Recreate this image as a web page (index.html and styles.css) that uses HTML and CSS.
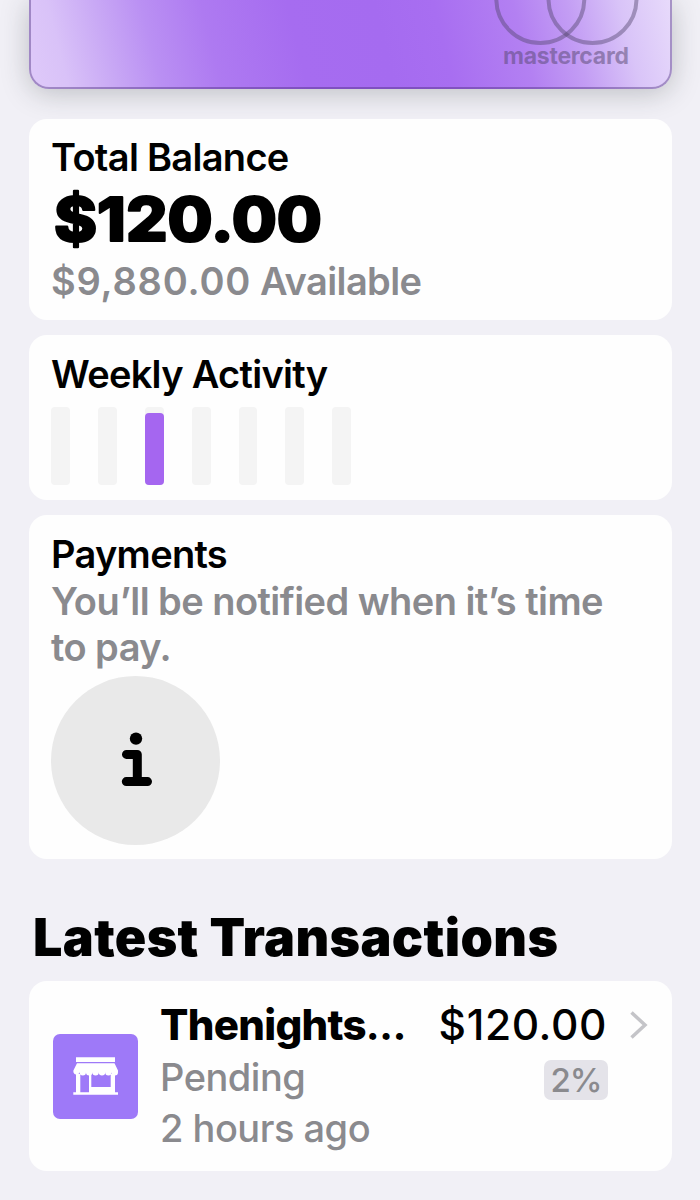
FILE: index.html
```
<!DOCTYPE html>
<html lang="en">
<head>
    <meta charset="UTF-8">
    <meta name="viewport" content="width=device-width, initial-scale=1.0">
    <title>Card</title>
    <link rel="stylesheet" href="styles.css">
</head>
<body>
    <div class="wallet">
        <div class="credit-card">
            <svg class="brand" width="150" height="88" viewBox="0 0 150 88">
                <g class="brand-rings">
                    <circle cx="50.3" cy="-1" r="44"/>
                    <circle cx="102.5" cy="-1" r="44"/>
                </g>
                <text class="brand-name" x="13" y="63.5" textLength="126">mastercard</text>
            </svg>
        </div>

        <div class="panel balance">
            <h2>Total Balance</h2>
            <svg class="amount" width="290" height="76" viewBox="0 0 290 76">
                <text x="3" y="61" textLength="268" lengthAdjust="spacingAndGlyphs">$120.00</text>
            </svg>
            <p class="available"><span class="digits">$9,880.00</span> Available</p>
        </div>

        <div class="panel activity">
            <h2>Weekly Activity</h2>
            <div class="bars">
                <div class="bar"></div>
                <div class="bar"></div>
                <div class="bar"><span style="height: 92%"></span></div>
                <div class="bar"></div>
                <div class="bar"></div>
                <div class="bar"></div>
                <div class="bar"></div>
            </div>
        </div>

        <div class="panel payments">
            <h2>Payments</h2>
            <p class="notice">You’ll be notified when it’s time<br>to pay.</p>
            <div class="info">
                <svg width="32" height="56" viewBox="0 0 32 56">
                    <circle cx="16" cy="6.6" r="6.2"/>
                    <path d="M6.5 22.4H17.3V49.6H6.3H27.5"/>
                </svg>
            </div>
        </div>

        <h1>Latest Transactions</h1>

        <div class="panel transaction">
            <div class="shop-icon">
                <svg width="85" height="85" viewBox="0 0 85 85">
                    <path d="M23 23.3H62V28H23Z"/>
                    <path d="M24 29.3H61.5L65 36.5V38.3a3.2 3.2 0 0 1-6.4 0a3.2 3.2 0 0 1-6.4 0a3.2 3.2 0 0 1-6.4 0a3.2 3.2 0 0 1-6.4 0a3.2 3.2 0 0 1-6.4 0a3.2 3.2 0 0 1-6.4 0a3.2 3.2 0 0 1-6.2 0V36.5Z"/>
                    <path d="M23 40H27.3V58.3H36V40H38.3V53H57.7V40H62V58.3H65V60.7H20.3V58.3H23Z"/>
                </svg>
            </div>
            <div class="details">
                <div class="merchant">Thenights<span class="dots">…</span></div>
                <div class="status">Pending</div>
                <div class="time">2 hours ago</div>
            </div>
            <div class="price">
                <div class="total">$120.00</div>
                <div class="cashback">2%</div>
            </div>
            <svg class="chevron" width="18" height="28" viewBox="0 0 18 28">
                <path d="M1.5 1.5L15 14L1.5 26.5"/>
            </svg>
        </div>
    </div>
</body>
</html>
```
FILE: styles.css
```
* {
    box-sizing: border-box;
}

body {
    font-family: Inter, 'Liberation Sans', sans-serif;
    margin: 0;
    background: #f1f0f6;
    color: #000;
    overflow: hidden;
}

h1, h2, p {
    margin: 0;
}

.wallet {
    width: 700px;
    height: 1200px;
    padding: 0 28px 0 29px;
}

.credit-card {
    display: flex;
    justify-content: flex-end;
    height: 89px;
    margin-bottom: 30px;
    padding-right: 30px;
    border: 2px solid rgba(70, 40, 120, 0.4);
    border-top: none;
    border-radius: 0 0 20px 20px;
    background: linear-gradient(76deg, #dfcaf9 0%, #d9c2f8 6%, #c9a9f5 13%, #ba90f3 20%, #ae7af1 29%, #a66cf0 42%, #a56bf0 55%, #a86ef1 64%, #b380f2 76%, #c39df4 84%, #d9c4f8 92%, #e8dbfb 100%) border-box;
    box-shadow: 0 4px 28px rgba(40, 45, 50, 0.26);
}

.brand-rings {
    fill: none;
    stroke: rgba(85, 70, 110, 0.45);
    stroke-width: 4;
}

.brand-name {
    font-size: 23px;
    font-weight: 700;
    fill: rgba(85, 70, 110, 0.5);
}

.panel {
    margin-bottom: 15px;
    padding: 0 22px;
    border-radius: 18px;
    background: #fefefe;
}

h2 {
    font-size: 38px;
    font-weight: 600;
    line-height: 46px;
    letter-spacing: -0.7px;
}

.balance {
    height: 201px;
    padding-top: 15px;
}

.amount {
    display: block;
}

.amount text {
    font-size: 61px;
    font-weight: 800;
    stroke: #000;
    stroke-width: 2.2;
    stroke-linejoin: round;
}

.available {
    margin-top: 2px;
    color: #8a8a8e;
    font-size: 38px;
    font-weight: 600;
    line-height: 46px;
    letter-spacing: -0.6px;
}

.digits {
    letter-spacing: 0.8px;
}

.activity {
    height: 165px;
    padding-top: 16px;
}

.bars {
    display: flex;
    gap: 28px;
    margin-top: 10px;
    padding-left: 0.4px;
}

.bar {
    display: flex;
    align-items: flex-end;
    width: 18.8px;
    height: 78px;
    border-radius: 4px;
    background: #f4f4f4;
}

.bar span {
    width: 100%;
    border-radius: 4px;
    background: #a566f0;
}

.payments {
    height: 344px;
    padding-top: 16px;
}

.notice {
    margin-top: 1px;
    color: #8a8a8e;
    font-size: 38px;
    font-weight: 600;
    line-height: 46px;
    letter-spacing: -0.55px;
}

.info {
    display: flex;
    align-items: center;
    justify-content: center;
    width: 169px;
    height: 169px;
    margin-top: 5.5px;
    border-radius: 50%;
    background: #e9e9e9;
}

.info path {
    fill: none;
    stroke: #000;
    stroke-width: 9;
    stroke-linecap: round;
    stroke-linejoin: round;
}

h1 {
    margin: 49px 0 13px 4px;
    font-size: 52px;
    font-weight: 900;
    line-height: 60px;
    letter-spacing: 0.35px;
}

.transaction {
    display: flex;
    height: 190px;
    padding-left: 24px;
}

.shop-icon {
    width: 85px;
    height: 85px;
    margin-top: 53px;
    border-radius: 7px;
    background: #9e79f8;
}

.shop-icon svg {
    display: block;
    fill: #fff;
}

.details {
    width: 260px;
    padding: 17px 0 0 22px;
    white-space: nowrap;
}

.merchant {
    height: 54px;
    font-size: 42px;
    font-weight: 800;
    line-height: 53px;
    letter-spacing: -0.7px;
}

.dots {
    font-size: 38px;
}

.status,
.time {
    color: #8a8a8e;
    font-size: 38px;
    font-weight: 500;
    line-height: 51px;
    letter-spacing: -0.5px;
}

.price {
    display: flex;
    flex-direction: column;
    align-items: flex-end;
    width: 210px;
    padding-top: 17px;
}

.total {
    margin-right: 1px;
    font-size: 42.5px;
    font-weight: 500;
    line-height: 54px;
    letter-spacing: 0.6px;
}

.cashback {
    width: 64px;
    height: 40px;
    margin-top: 8px;
    border-radius: 7px;
    background: #e4e3e9;
    color: #8a8a8e;
    font-size: 33px;
    font-weight: 500;
    line-height: 40px;
    letter-spacing: -1px;
    text-align: center;
}

.chevron {
    margin: 30px 0 0 22px;
    fill: none;
    stroke: #c4c4c8;
    stroke-width: 3.5;
}
```
